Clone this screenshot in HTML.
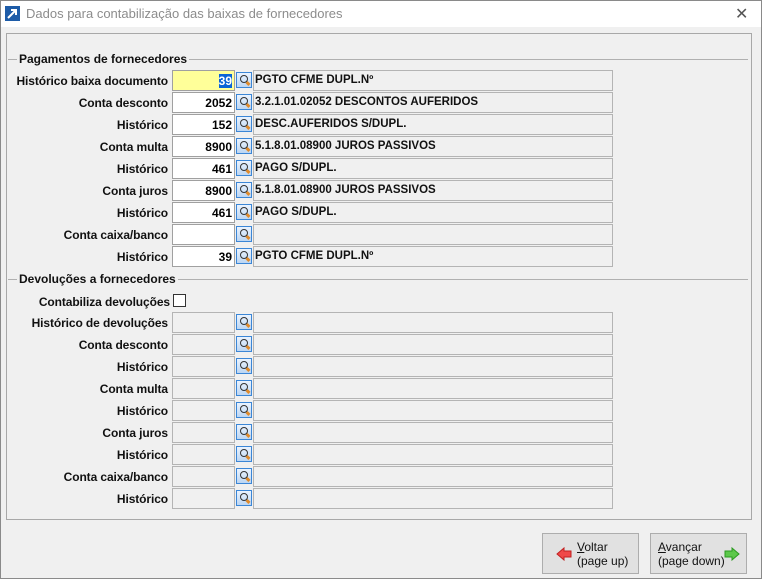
<!DOCTYPE html>
<html><head><meta charset="utf-8"><style>
*{box-sizing:border-box;margin:0;padding:0}
body{width:762px;height:579px;background:#f0f0f0;font-family:"Liberation Sans",sans-serif;position:relative;overflow:hidden}
.frame{position:absolute;left:0;top:0;width:762px;height:579px;border:1px solid #8a8a8a;pointer-events:none}
.title{position:absolute;left:1px;top:1px;width:760px;height:26px;background:#fff}
.title span{position:absolute;left:25px;top:5px;font-size:13px;color:#8c8c8c}
.x{position:absolute;left:734px;top:3px;font-size:16px;color:#555}
.panel{position:absolute;left:6px;top:33px;width:746px;height:487px;border:1px solid #a8a8a8;background:#f0f0f0}
.sec{position:absolute;left:8px;width:740px;height:1px;background:#b0b0b0}
.st{position:absolute;font-size:12px;font-weight:bold;color:#111;background:#f0f0f0;padding:0 2px}
.l{position:absolute;right:594px;font-size:12px;letter-spacing:-0.1px;font-weight:bold;color:#111;white-space:nowrap;line-height:14px}
.c{position:absolute;left:172px;width:63px;height:21px;border:1px solid #a0a0a0;background:#fff;font-size:12px;font-weight:bold;text-align:right;padding:3px 2px 0 0}
.c.d{background:#f0f0f0;border-color:#b4b4b4}
.i{position:absolute;left:236px;width:16px;height:16px;border:1px solid #3b86d6;background:linear-gradient(#eaf3ff,#bcd6f3)}
.i:after{content:"";position:absolute;left:3px;top:2px;width:6px;height:6px;border:1.5px solid #333;border-radius:50%}
.i:before{content:"";position:absolute;left:9px;top:9px;width:4px;height:3px;background:#e08a2a;transform:rotate(45deg)}
.t{position:absolute;left:253px;width:360px;height:21px;border:1px solid #b4b4b4;background:#f0f0f0;font-size:11.5px;font-weight:bold;padding:3px 0 0 1px;color:#111}
.btn{position:absolute;top:533px;width:97px;height:41px;border:1px solid #adadad;background:#e1e1e1;font-size:12px;color:#111;line-height:14px}
</style></head><body>
<div class="title"><svg style="position:absolute;left:4px;top:5px" width="15" height="15"><rect width="15" height="15" fill="#1e5ca8"/><path d="M3 12 L11 4 M6 4 H11 V9" stroke="#fff" stroke-width="2" fill="none"/></svg><span>Dados para contabilização das baixas de fornecedores</span><div class="x">✕</div></div>
<div class="panel"></div>
<div class="sec" style="top:59px"></div><div class="st" style="left:17px;top:52px">Pagamentos de fornecedores</div>
<div class="sec" style="top:279px"></div><div class="st" style="left:17px;top:272px">Devoluções a fornecedores</div>

<div class="l" style="top:74px">Histórico baixa documento</div><div class="c" style="top:70px;background:#ffff99"><span style="background:#0a64d6;color:#fff">39</span></div><div class="i" style="top:72px"></div><div class="t" style="top:70px">PGTO CFME DUPL.Nº</div>
<div class="l" style="top:96px">Conta desconto</div><div class="c" style="top:92px">2052</div><div class="i" style="top:94px"></div><div class="t" style="top:92px">3.2.1.01.02052 DESCONTOS AUFERIDOS</div>
<div class="l" style="top:118px">Histórico</div><div class="c" style="top:114px">152</div><div class="i" style="top:116px"></div><div class="t" style="top:114px">DESC.AUFERIDOS S/DUPL.</div>
<div class="l" style="top:140px">Conta multa</div><div class="c" style="top:136px">8900</div><div class="i" style="top:138px"></div><div class="t" style="top:136px">5.1.8.01.08900 JUROS PASSIVOS</div>
<div class="l" style="top:162px">Histórico</div><div class="c" style="top:158px">461</div><div class="i" style="top:160px"></div><div class="t" style="top:158px">PAGO S/DUPL.</div>
<div class="l" style="top:184px">Conta juros</div><div class="c" style="top:180px">8900</div><div class="i" style="top:182px"></div><div class="t" style="top:180px">5.1.8.01.08900 JUROS PASSIVOS</div>
<div class="l" style="top:206px">Histórico</div><div class="c" style="top:202px">461</div><div class="i" style="top:204px"></div><div class="t" style="top:202px">PAGO S/DUPL.</div>
<div class="l" style="top:228px">Conta caixa/banco</div><div class="c" style="top:224px"></div><div class="i" style="top:226px"></div><div class="t" style="top:224px"></div>
<div class="l" style="top:250px">Histórico</div><div class="c" style="top:246px">39</div><div class="i" style="top:248px"></div><div class="t" style="top:246px">PGTO CFME DUPL.Nº</div>

<div class="l" style="top:295px;right:592px">Contabiliza devoluções</div><div style="position:absolute;left:173px;top:294px;width:13px;height:13px;border:1px solid #333;background:#fff"></div>

<div class="l" style="top:316px">Histórico de devoluções</div><div class="c d" style="top:312px"></div><div class="i" style="top:314px"></div><div class="t" style="top:312px"></div>
<div class="l" style="top:338px">Conta desconto</div><div class="c d" style="top:334px"></div><div class="i" style="top:336px"></div><div class="t" style="top:334px"></div>
<div class="l" style="top:360px">Histórico</div><div class="c d" style="top:356px"></div><div class="i" style="top:358px"></div><div class="t" style="top:356px"></div>
<div class="l" style="top:382px">Conta multa</div><div class="c d" style="top:378px"></div><div class="i" style="top:380px"></div><div class="t" style="top:378px"></div>
<div class="l" style="top:404px">Histórico</div><div class="c d" style="top:400px"></div><div class="i" style="top:402px"></div><div class="t" style="top:400px"></div>
<div class="l" style="top:426px">Conta juros</div><div class="c d" style="top:422px"></div><div class="i" style="top:424px"></div><div class="t" style="top:422px"></div>
<div class="l" style="top:448px">Histórico</div><div class="c d" style="top:444px"></div><div class="i" style="top:446px"></div><div class="t" style="top:444px"></div>
<div class="l" style="top:470px">Conta caixa/banco</div><div class="c d" style="top:466px"></div><div class="i" style="top:468px"></div><div class="t" style="top:466px"></div>
<div class="l" style="top:492px">Histórico</div><div class="c d" style="top:488px"></div><div class="i" style="top:490px"></div><div class="t" style="top:488px"></div>

<div class="btn" style="left:542px"><svg style="position:absolute;left:13px;top:13px" width="16" height="14"><path d="M1 7 L8 1 V4 H15 V10 H8 V13 Z" fill="#f04848" stroke="#c02020"/></svg><div style="position:absolute;left:34px;top:6px"><u>V</u>oltar<br>(page up)</div></div>
<div class="btn" style="left:650px"><div style="position:absolute;left:7px;top:6px"><u>A</u>vançar<br>(page down)</div><svg style="position:absolute;left:73px;top:13px" width="16" height="14"><path d="M15 7 L8 1 V4 H1 V10 H8 V13 Z" fill="#5cc84a" stroke="#2a9a20"/></svg></div>
<div class="frame"></div>
</body></html>
